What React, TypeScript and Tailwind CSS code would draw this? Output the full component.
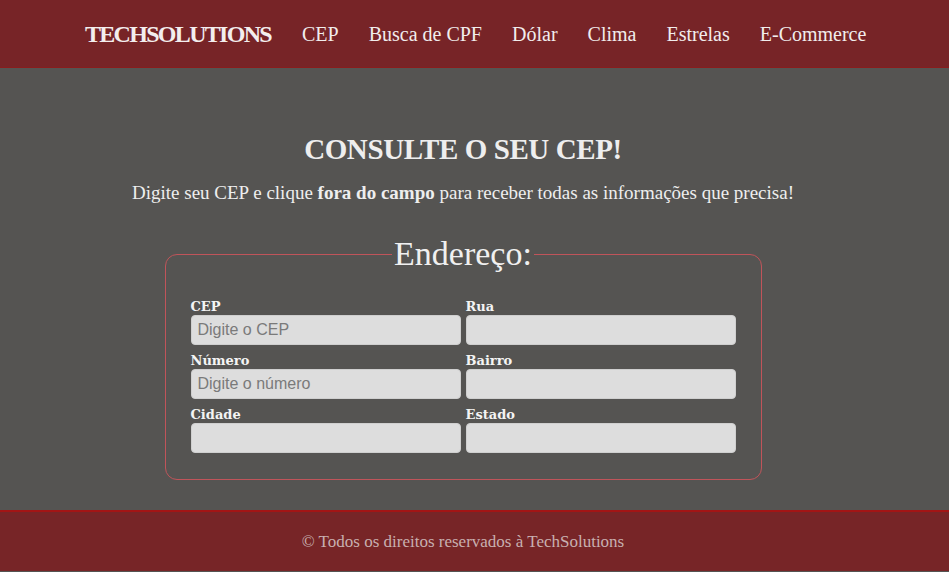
import React from 'react';

const serif = { fontFamily: '"Liberation Serif", "DejaVu Serif", serif' };

const links = ['CEP', 'Busca de CPF', 'Dólar', 'Clima', 'Estrelas', 'E-Commerce'];

const fields = [
  { label: 'CEP', placeholder: 'Digite o CEP' },
  { label: 'Rua', placeholder: '' },
  { label: 'Número', placeholder: 'Digite o número' },
  { label: 'Bairro', placeholder: '' },
  { label: 'Cidade', placeholder: '' },
  { label: 'Estado', placeholder: '' },
];

export default function App() {
  return (
    <div className="min-h-[572px] bg-[#555452] flex flex-col font-['Liberation_Serif',serif]" style={serif}>
      <header className="h-[68px] bg-[#772427] border-b border-[#8a1c1c] flex items-center pl-[85px]">
        <span className="text-[24px] font-bold text-[#f3eeee] tracking-[-1.7px] mr-[31px]">TECHSOLUTIONS</span>
        <nav className="flex gap-[30px] text-[20px] text-[#f1eded]">
          {links.map((l) => (
            <a key={l} className="cursor-pointer">
              {l}
            </a>
          ))}
        </nav>
      </header>

      <main className="flex-1 flex flex-col items-center pr-[23px] pt-[62px] text-[#eeeeee]">
        <h1 className="text-[29px] font-bold leading-[38px] tracking-[-0.4px]">CONSULTE O SEU CEP!</h1>
        <p className="text-[19px] mt-[13px] leading-[24px]">
          Digite seu CEP e clique <strong>fora do campo</strong> para receber todas as informações que precisa!
        </p>

        <fieldset className="mt-[31px] w-[597px] border border-[#c0545a] rounded-[12px] px-[25px] pt-[18px] pb-[26px]">
          <legend className="mx-auto px-[2px] text-[34px] leading-[36px] text-[#f0f0f0]">Endereço:</legend>
          <div className="grid grid-cols-2 gap-x-[5px] gap-y-[8px] mt-[9px]">
            {fields.map((f) => (
              <label key={f.label} className="flex flex-col">
                <span className="text-[13px] font-bold leading-[15px] text-[#f4f4f4] font-['DejaVu_Serif',serif]">
                  {f.label}
                </span>
                <input
                  placeholder={f.placeholder}
                  className="mt-[1px] h-[30px] rounded-[4px] border border-[#cfcfcf] bg-[#dddddd] px-[6px] text-[16px] text-[#333] placeholder:text-[#7a7a7a] font-['Liberation_Sans',Arial,sans-serif] outline-none"
                />
              </label>
            ))}
          </div>
        </fieldset>
      </main>

      <footer className="mt-[30px] h-[61px] bg-[#772527] border-t-2 border-[#a31515] flex items-center justify-center pr-[23px] mb-[2px]">
        <span className="text-[17px] text-[#c8b0b0]">© Todos os direitos reservados à TechSolutions</span>
      </footer>
    </div>
  );
}
